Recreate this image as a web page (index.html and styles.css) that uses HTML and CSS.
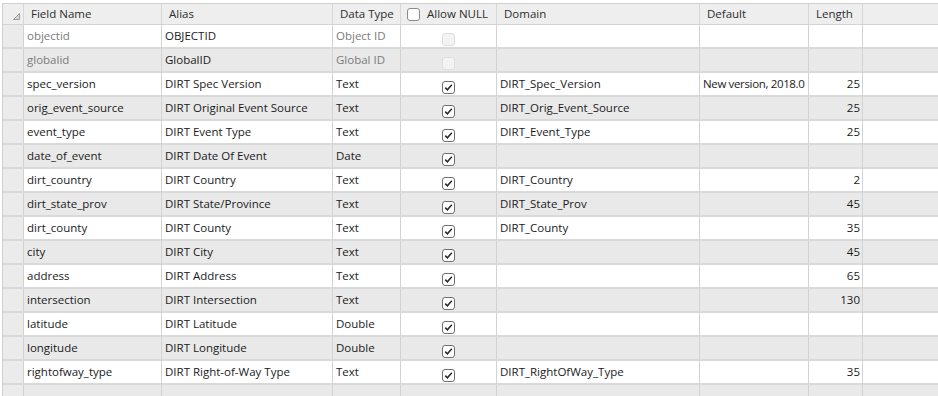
FILE: index.html
```html
<!DOCTYPE html>
<html>
<head>
<meta charset="utf-8">
<link rel="stylesheet" href="styles.css">
</head>
<body>
<div class="table">
  <div class="row head">
    <div class="cell corner"><svg width="7" height="7" viewBox="0 0 7 7"><polygon points="6.5,0.5 6.5,6.5 0.5,6.5" fill="#d8d8d8" stroke="#9a9a9a" stroke-width="1"/></svg></div>
    <div class="cell">Field Name</div>
    <div class="cell">Alias</div>
    <div class="cell">Data Type</div>
    <div class="cell nullh"><span class="cb"></span>Allow NULL</div>
    <div class="cell">Domain</div>
    <div class="cell">Default</div>
    <div class="cell">Length</div>
    <div class="cell last"></div>
  </div>

  <div class="row">
    <div class="cell rh"></div><div class="cell dim">objectid</div><div class="cell">OBJECTID</div><div class="cell dim">Object ID</div>
    <div class="cell chk"><span class="cb off"></span></div><div class="cell"></div><div class="cell"></div><div class="cell num"></div><div class="cell last"></div>
  </div>
  <div class="row alt">
    <div class="cell rh"></div><div class="cell dim">globalid</div><div class="cell">GlobalID</div><div class="cell dim">Global ID</div>
    <div class="cell chk"><span class="cb off"></span></div><div class="cell"></div><div class="cell"></div><div class="cell num"></div><div class="cell last"></div>
  </div>
  <div class="row">
    <div class="cell rh"></div><div class="cell">spec_version</div><div class="cell">DIRT Spec Version</div><div class="cell">Text</div>
    <div class="cell chk"><span class="cb on"><svg width="11" height="11" viewBox="0 0 11 11"><path d="M2.2 5.6 L4.4 7.8 L8.8 2.8" fill="none" stroke="#2a2a2a" stroke-width="1.5"/></svg></span></div><div class="cell">DIRT_Spec_Version</div><div class="cell tight">New version, 2018.0</div><div class="cell num">25</div><div class="cell last"></div>
  </div>
  <div class="row alt">
    <div class="cell rh"></div><div class="cell">orig_event_source</div><div class="cell">DIRT Original Event Source</div><div class="cell">Text</div>
    <div class="cell chk"><span class="cb on"><svg width="11" height="11" viewBox="0 0 11 11"><path d="M2.2 5.6 L4.4 7.8 L8.8 2.8" fill="none" stroke="#2a2a2a" stroke-width="1.5"/></svg></span></div><div class="cell">DIRT_Orig_Event_Source</div><div class="cell"></div><div class="cell num">25</div><div class="cell last"></div>
  </div>
  <div class="row">
    <div class="cell rh"></div><div class="cell">event_type</div><div class="cell">DIRT Event Type</div><div class="cell">Text</div>
    <div class="cell chk"><span class="cb on"><svg width="11" height="11" viewBox="0 0 11 11"><path d="M2.2 5.6 L4.4 7.8 L8.8 2.8" fill="none" stroke="#2a2a2a" stroke-width="1.5"/></svg></span></div><div class="cell">DIRT_Event_Type</div><div class="cell"></div><div class="cell num">25</div><div class="cell last"></div>
  </div>
  <div class="row alt">
    <div class="cell rh"></div><div class="cell">date_of_event</div><div class="cell">DIRT Date Of Event</div><div class="cell">Date</div>
    <div class="cell chk"><span class="cb on"><svg width="11" height="11" viewBox="0 0 11 11"><path d="M2.2 5.6 L4.4 7.8 L8.8 2.8" fill="none" stroke="#2a2a2a" stroke-width="1.5"/></svg></span></div><div class="cell"></div><div class="cell"></div><div class="cell num"></div><div class="cell last"></div>
  </div>
  <div class="row">
    <div class="cell rh"></div><div class="cell">dirt_country</div><div class="cell">DIRT Country</div><div class="cell">Text</div>
    <div class="cell chk"><span class="cb on"><svg width="11" height="11" viewBox="0 0 11 11"><path d="M2.2 5.6 L4.4 7.8 L8.8 2.8" fill="none" stroke="#2a2a2a" stroke-width="1.5"/></svg></span></div><div class="cell">DIRT_Country</div><div class="cell"></div><div class="cell num">2</div><div class="cell last"></div>
  </div>
  <div class="row alt">
    <div class="cell rh"></div><div class="cell">dirt_state_prov</div><div class="cell">DIRT State/Province</div><div class="cell">Text</div>
    <div class="cell chk"><span class="cb on"><svg width="11" height="11" viewBox="0 0 11 11"><path d="M2.2 5.6 L4.4 7.8 L8.8 2.8" fill="none" stroke="#2a2a2a" stroke-width="1.5"/></svg></span></div><div class="cell">DIRT_State_Prov</div><div class="cell"></div><div class="cell num">45</div><div class="cell last"></div>
  </div>
  <div class="row">
    <div class="cell rh"></div><div class="cell">dirt_county</div><div class="cell">DIRT County</div><div class="cell">Text</div>
    <div class="cell chk"><span class="cb on"><svg width="11" height="11" viewBox="0 0 11 11"><path d="M2.2 5.6 L4.4 7.8 L8.8 2.8" fill="none" stroke="#2a2a2a" stroke-width="1.5"/></svg></span></div><div class="cell">DIRT_County</div><div class="cell"></div><div class="cell num">35</div><div class="cell last"></div>
  </div>
  <div class="row alt">
    <div class="cell rh"></div><div class="cell">city</div><div class="cell">DIRT City</div><div class="cell">Text</div>
    <div class="cell chk"><span class="cb on"><svg width="11" height="11" viewBox="0 0 11 11"><path d="M2.2 5.6 L4.4 7.8 L8.8 2.8" fill="none" stroke="#2a2a2a" stroke-width="1.5"/></svg></span></div><div class="cell"></div><div class="cell"></div><div class="cell num">45</div><div class="cell last"></div>
  </div>
  <div class="row">
    <div class="cell rh"></div><div class="cell">address</div><div class="cell">DIRT Address</div><div class="cell">Text</div>
    <div class="cell chk"><span class="cb on"><svg width="11" height="11" viewBox="0 0 11 11"><path d="M2.2 5.6 L4.4 7.8 L8.8 2.8" fill="none" stroke="#2a2a2a" stroke-width="1.5"/></svg></span></div><div class="cell"></div><div class="cell"></div><div class="cell num">65</div><div class="cell last"></div>
  </div>
  <div class="row alt">
    <div class="cell rh"></div><div class="cell">intersection</div><div class="cell">DIRT Intersection</div><div class="cell">Text</div>
    <div class="cell chk"><span class="cb on"><svg width="11" height="11" viewBox="0 0 11 11"><path d="M2.2 5.6 L4.4 7.8 L8.8 2.8" fill="none" stroke="#2a2a2a" stroke-width="1.5"/></svg></span></div><div class="cell"></div><div class="cell"></div><div class="cell num">130</div><div class="cell last"></div>
  </div>
  <div class="row">
    <div class="cell rh"></div><div class="cell">latitude</div><div class="cell">DIRT Latitude</div><div class="cell">Double</div>
    <div class="cell chk"><span class="cb on"><svg width="11" height="11" viewBox="0 0 11 11"><path d="M2.2 5.6 L4.4 7.8 L8.8 2.8" fill="none" stroke="#2a2a2a" stroke-width="1.5"/></svg></span></div><div class="cell"></div><div class="cell"></div><div class="cell num"></div><div class="cell last"></div>
  </div>
  <div class="row alt">
    <div class="cell rh"></div><div class="cell">longitude</div><div class="cell">DIRT Longitude</div><div class="cell">Double</div>
    <div class="cell chk"><span class="cb on"><svg width="11" height="11" viewBox="0 0 11 11"><path d="M2.2 5.6 L4.4 7.8 L8.8 2.8" fill="none" stroke="#2a2a2a" stroke-width="1.5"/></svg></span></div><div class="cell"></div><div class="cell"></div><div class="cell num"></div><div class="cell last"></div>
  </div>
  <div class="row">
    <div class="cell rh"></div><div class="cell">rightofway_type</div><div class="cell">DIRT Right-of-Way Type</div><div class="cell">Text</div>
    <div class="cell chk"><span class="cb on"><svg width="11" height="11" viewBox="0 0 11 11"><path d="M2.2 5.6 L4.4 7.8 L8.8 2.8" fill="none" stroke="#2a2a2a" stroke-width="1.5"/></svg></span></div><div class="cell">DIRT_RightOfWay_Type</div><div class="cell"></div><div class="cell num">35</div><div class="cell last"></div>
  </div>
  <div class="row alt">
    <div class="cell rh"></div><div class="cell"></div><div class="cell"></div><div class="cell"></div>
    <div class="cell"></div><div class="cell"></div><div class="cell"></div><div class="cell"></div><div class="cell last"></div>
  </div>
</div>
</body>
</html>
```

FILE: styles.css
```css
html, body {
  margin: 0;
  padding: 0;
  background: #ffffff;
  overflow: hidden;
}
body {
  width: 938px;
  height: 396px;
  font-family: "Open Sans", "Noto Sans", sans-serif;
  font-size: 11.5px;
  color: #1b1b1b;
}
.table {
  margin: 3px 0 0 2px;
  border-top: 1px solid #cfcfcf;
  border-left: 1px solid #cfcfcf;
}
.row {
  display: grid;
  grid-template-columns: 21px 138px 171px 68px 96px 203px 109px 54px 1fr;
  background: #ffffff;
}
.row.alt {
  background: #e9e9e9;
}
.cell {
  height: 22px;
  line-height: 22px;
  padding: 0 4px 0 3px;
  border-right: 1px solid #d2d2d2;
  border-bottom: 2px solid #d9d9d9;
  white-space: nowrap;
  overflow: hidden;
}
.cell.last {
  border-right: none;
}
.head .cell {
  height: 20px;
  line-height: 20px;
  background: #eeeeee;
  border-bottom: 1px solid #d3d3d3;
  border-right: 1px solid #d7d7d7;
  padding-left: 7px;
  color: #2d2d2d;
}
.head .cell.last {
  border-right: none;
}
.head .corner {
  padding: 0;
  display: flex;
  align-items: flex-end;
  justify-content: flex-end;
}
.corner svg {
  margin: 0 3px 4px 0;
}
.rh {
  background: #ebebeb;
  padding: 0;
}
.dim {
  color: #7b7b7b;
}
.num {
  text-align: right;
  padding-right: 2px;
}
.tight {
  letter-spacing: -0.35px;
  padding-right: 0;
}
.chk {
  display: flex;
  justify-content: center;
  align-items: flex-start;
  padding: 8px 0 0 0;
  height: 14px;
}
.head .nullh {
  display: flex;
  align-items: center;
  gap: 7px;
  padding-left: 6px;
}
.cb {
  box-sizing: border-box;
  width: 13px;
  height: 13px;
  border: 1px solid #8a8a8a;
  border-radius: 3px;
  background: #ffffff;
  display: inline-flex;
  align-items: center;
  justify-content: center;
}
.cb.on {
  border-color: #6f6f6f;
}
.cb.off {
  border-color: #dedede;
  background: #f3f3f3;
}
```
